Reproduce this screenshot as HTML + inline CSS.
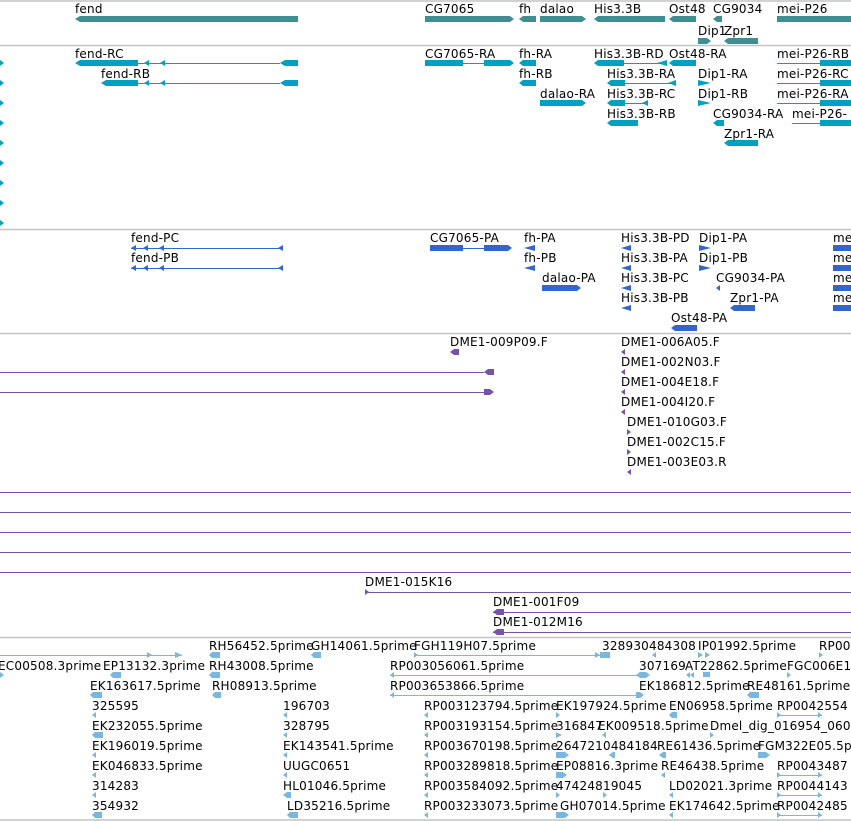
<!DOCTYPE html>
<html><head><meta charset="utf-8"><style>
html,body{margin:0;padding:0;background:#fff;width:851px;height:821px;overflow:hidden}
svg text{font-family:"DejaVu Sans","Liberation Sans",sans-serif;font-size:12px;fill:#000;letter-spacing:0.2px}
</style></head><body>
<svg width="851" height="821" xmlns="http://www.w3.org/2000/svg">
<g stroke="#c4c4c4" stroke-width="1.5">
<line x1="0" y1="1" x2="851" y2="1"/><line x1="0" y1="45.5" x2="851" y2="45.5"/>
<line x1="0" y1="229.5" x2="851" y2="229.5"/><line x1="0" y1="333.5" x2="851" y2="333.5"/>
<line x1="0" y1="637.5" x2="851" y2="637.5"/><line x1="0" y1="820" x2="851" y2="820"/>
</g>

<g fill="#3f8e91">
<polygon points="75,19 80,16 298,16 298,22 80,22"/>
<polygon points="425,16 510,16 514,19 510,22 425,22"/>
<polygon points="519,19 523,16 536,16 536,22 523,22"/>
<polygon points="540,16 582,16 586,19 582,22 540,22"/>
<polygon points="594,19 598,16 665,16 665,22 598,22"/>
<polygon points="669,19 673,16 696,16 696,22 673,22"/>
<polygon points="713,19 717,16 722,16 722,22 717,22"/>
<rect x="777" y="16" width="74" height="6"/>
<polygon points="698,38 707,38 711,41 707,44 698,44"/>
<polygon points="724,41 728,38 758,38 758,44 728,44"/>
</g>
<text x="75" y="13">fend</text><text x="425" y="13">CG7065</text><text x="519" y="13">fh</text>
<text x="540" y="13">dalao</text><text x="594" y="13">His3.3B</text><text x="669" y="13">Ost48</text>
<text x="713" y="13">CG9034</text><text x="777" y="13">mei-P26</text>
<text x="698" y="35">Dip1</text><text x="724" y="35">Zpr1</text>

<g fill="#00a0c0" stroke="#00a0c0">
<g stroke="none">
<polygon points="0,60 4,63 0,66"/><polygon points="0,80 4,83 0,86"/><polygon points="0,100 4,103 0,106"/>
<polygon points="0,120 4,123 0,126"/><polygon points="0,140 4,143 0,146"/><polygon points="0,160 4,163 0,166"/>
<polygon points="0,180 4,183 0,186"/><polygon points="0,200 4,203 0,206"/><polygon points="0,220 4,223 0,226"/>
</g>
<line x1="138" y1="63.5" x2="280" y2="63.5"/><line x1="138" y1="83.5" x2="280" y2="83.5"/>
<line x1="463" y1="63.5" x2="484" y2="63.5"/><line x1="624" y1="63.5" x2="667" y2="63.5"/>
<line x1="625" y1="83.5" x2="676" y2="83.5"/><line x1="625" y1="103.5" x2="648" y2="103.5"/>
<line x1="777" y1="63.5" x2="820" y2="63.5"/><line x1="777" y1="83.5" x2="820" y2="83.5"/>
<line x1="777" y1="103.5" x2="820" y2="103.5"/><line x1="792" y1="123.5" x2="820" y2="123.5"/>
<g stroke="none">
<polygon points="75,63 80,60 138,60 138,66 80,66"/><polygon points="101,83 106,80 138,80 138,86 106,86"/>
<polygon points="144,63 149,60 149,66"/><polygon points="160,63 165,60 165,66"/>
<polygon points="144,83 149,80 149,86"/><polygon points="160,83 165,80 165,86"/>
<polygon points="280,63 285,60 298,60 298,66 285,66"/><polygon points="280,83 285,80 298,80 298,86 285,86"/>
<polygon points="425,60 463,60 463,66 425,66"/><polygon points="484,60 510,60 514,63 510,66 484,66"/>
<polygon points="519,63 523,60 536,60 536,66 523,66"/><polygon points="519,83 523,80 536,80 536,86 523,86"/>
<polygon points="540,100 582,100 586,103 582,106 540,106"/>
<polygon points="594,63 598,60 624,60 624,66 598,66"/><polygon points="657,63 667,60 667,66"/>
<polygon points="607,83 611,80 625,80 625,86 611,86"/><polygon points="668,83 676,80 676,86"/>
<polygon points="607,103 611,100 625,100 625,106 611,106"/><polygon points="642,103 648,100 648,106"/>
<polygon points="607,123 611,120 638,120 638,126 611,126"/>
<polygon points="669,63 673,60 696,60 696,66 673,66"/>
<polygon points="698,80 711,83 698,86"/><polygon points="698,100 711,103 698,106"/>
<polygon points="713,123 717,120 724,120 724,126 717,126"/>
<polygon points="724,143 728,140 758,140 758,146 728,146"/>
<rect x="820" y="60" width="31" height="6"/><rect x="820" y="80" width="31" height="6"/>
<rect x="820" y="100" width="31" height="6"/><rect x="820" y="120" width="31" height="6"/>
</g></g>
<text x="75" y="58">fend-RC</text><text x="101" y="78">fend-RB</text>
<text x="425" y="58">CG7065-RA</text><text x="519" y="58">fh-RA</text><text x="519" y="78">fh-RB</text>
<text x="540" y="98">dalao-RA</text><text x="594" y="58">His3.3B-RD</text><text x="607" y="78">His3.3B-RA</text>
<text x="607" y="98">His3.3B-RC</text><text x="607" y="118">His3.3B-RB</text><text x="669" y="58">Ost48-RA</text>
<text x="698" y="78">Dip1-RA</text><text x="698" y="98">Dip1-RB</text><text x="713" y="118">CG9034-RA</text>
<text x="724" y="138">Zpr1-RA</text><text x="777" y="58">mei-P26-RB</text><text x="777" y="78">mei-P26-RC</text>
<text x="777" y="98">mei-P26-RA</text><text x="792" y="118">mei-P26-</text>

<g fill="#3366cc" stroke="#3366cc">
<line x1="131" y1="248.5" x2="283" y2="248.5"/><line x1="131" y1="268.5" x2="283" y2="268.5"/>
<line x1="463" y1="248.5" x2="484" y2="248.5"/>
<g stroke="none">
<polygon points="131,248 136,245 136,251"/><polygon points="143,248 148,245 148,251"/><polygon points="159,248 164,245 164,251"/><polygon points="278,248 283,245 283,251"/>
<polygon points="131,268 136,265 136,271"/><polygon points="143,268 148,265 148,271"/><polygon points="159,268 164,265 164,271"/><polygon points="278,268 283,265 283,271"/>
<rect x="430" y="245" width="33" height="6"/><polygon points="484,245 508,245 512,248 508,251 484,251"/>
<polygon points="524,248 535,245 535,251"/><polygon points="524,268 535,265 535,271"/>
<polygon points="542,285 577,285 581,288 577,291 542,291"/>
<polygon points="621,248 631,245 631,251"/><polygon points="621,268 631,265 631,271"/>
<polygon points="621,288 631,285 631,291"/><polygon points="621,308 631,305 631,311"/>
<polygon points="699,245 711,248 699,251"/><polygon points="699,265 711,268 699,271"/>
<polygon points="716,288 720,285 720,291"/>
<polygon points="730,308 734,305 755,305 755,311 734,311"/>
<polygon points="671,328 675,325 697,325 697,331 675,331"/>
<rect x="833" y="245" width="18" height="6"/><rect x="833" y="265" width="18" height="6"/>
<rect x="833" y="285" width="18" height="6"/><rect x="833" y="305" width="18" height="6"/>
</g></g>
<text x="131" y="242">fend-PC</text><text x="131" y="262">fend-PB</text><text x="430" y="242">CG7065-PA</text>
<text x="524" y="242">fh-PA</text><text x="524" y="262">fh-PB</text><text x="542" y="282">dalao-PA</text>
<text x="621" y="242">His3.3B-PD</text><text x="621" y="262">His3.3B-PA</text><text x="621" y="282">His3.3B-PC</text>
<text x="621" y="302">His3.3B-PB</text><text x="699" y="242">Dip1-PA</text><text x="699" y="262">Dip1-PB</text>
<text x="716" y="282">CG9034-PA</text><text x="730" y="302">Zpr1-PA</text><text x="671" y="322">Ost48-PA</text>
<text x="833" y="242">me</text><text x="833" y="262">me</text><text x="833" y="282">me</text><text x="833" y="302">me</text>

<g fill="#7752aa" stroke="#7752aa">
<line x1="0" y1="372.5" x2="484" y2="372.5"/><line x1="0" y1="392.5" x2="484" y2="392.5"/>
<line x1="0" y1="492.5" x2="851" y2="492.5"/><line x1="0" y1="512.5" x2="851" y2="512.5"/>
<line x1="0" y1="532.5" x2="851" y2="532.5"/><line x1="0" y1="552.5" x2="851" y2="552.5"/>
<line x1="0" y1="572.5" x2="851" y2="572.5"/><line x1="365" y1="592.5" x2="851" y2="592.5"/>
<line x1="493" y1="612.5" x2="851" y2="612.5"/><line x1="493" y1="632.5" x2="851" y2="632.5"/>
<g stroke="none">
<polygon points="450,352 454,349 459,349 459,355 454,355"/>
<polygon points="484,372 488,369 494,369 494,375 488,375"/>
<polygon points="484,389 490,389 494,392 490,395 484,395"/>
<polygon points="621,352 625,349 625,355"/><polygon points="621,372 625,369 625,375"/>
<polygon points="621,392 625,389 625,395"/><polygon points="621,412 625,409 625,415"/>
<polygon points="627,429 631,432 627,435"/><polygon points="627,449 631,452 627,455"/>
<polygon points="627,472 631,469 631,475"/>
<polygon points="365,589 369,592 365,595"/>
<polygon points="493,612 497,609 504,609 504,615 497,615"/>
<polygon points="493,632 497,629 504,629 504,635 497,635"/>
</g></g>
<text x="450" y="346">DME1-009P09.F</text><text x="621" y="346">DME1-006A05.F</text>
<text x="621" y="366">DME1-002N03.F</text><text x="621" y="386">DME1-004E18.F</text>
<text x="621" y="406">DME1-004I20.F</text><text x="627" y="426">DME1-010G03.F</text>
<text x="627" y="446">DME1-002C15.F</text><text x="627" y="466">DME1-003E03.R</text>
<text x="365" y="586">DME1-015K16</text><text x="493" y="606">DME1-001F09</text><text x="493" y="626">DME1-012M16</text>

<g fill="#7bb6de" stroke="#7bb6de">
<line x1="0" y1="655.5" x2="182" y2="655.5"/><line x1="414" y1="655.5" x2="600" y2="655.5"/>
<line x1="390" y1="675.5" x2="640" y2="675.5"/><line x1="390" y1="695.5" x2="640" y2="695.5"/>
<line x1="777" y1="715.5" x2="822" y2="715.5"/><line x1="777" y1="775.5" x2="822" y2="775.5"/>
<line x1="777" y1="795.5" x2="822" y2="795.5"/><line x1="777" y1="815.5" x2="822" y2="815.5"/>
<g stroke="none">
<polygon points="147,652 152,655 147,658"/><polygon points="175,652 182,655 175,658"/>
<polygon points="209,655 212,652 220,652 220,658 212,658"/><polygon points="311,655 314,652 321,652 321,658 314,658"/>
<polygon points="414,652 418,655 414,658"/><polygon points="595,652 600,655 595,658"/><rect x="600" y="652" width="10" height="6"/>
<polygon points="652,655 656,652 656,658"/><polygon points="698,652 703,655 698,658"/><polygon points="705,652 710,655 705,658"/>
<polygon points="819,652 823,655 819,658"/>
<polygon points="0,672 4,675 0,678"/><polygon points="110,675 113,672 121,672 121,678 113,678"/>
<polygon points="209,675 212,672 220,672 220,678 212,678"/><polygon points="390,675 394,672 394,678"/>
<polygon points="636,675 640,672 646,672 650,675 646,678 640,678"/>
<polygon points="686,675 690,672 690,678"/><polygon points="690,675 694,672 694,678"/><rect x="703" y="672" width="7" height="5"/>
<polygon points="787,672 791,675 787,678"/>
<polygon points="90,695 93,692 102,692 102,698 93,698"/><polygon points="212,695 215,692 221,692 221,698 215,698"/>
<polygon points="390,695 394,692 394,698"/><polygon points="636,692 640,692 644,695 640,698 636,698"/>
<polygon points="747,695 750,692 759,692 759,698 750,698"/>
<polygon points="92,715 96,712 96,718"/><polygon points="283,715 287,712 287,718"/><polygon points="424,715 428,712 428,718"/>
<polygon points="556,712 560,715 556,718"/><polygon points="669,715 672,712 677,712 677,718 672,718"/><polygon points="777,712 781,715 777,718"/><polygon points="818,712 822,715 818,718"/>
<polygon points="92,735 95,732 103,732 103,738 95,738"/><polygon points="283,735 287,732 287,738"/><polygon points="424,735 428,732 428,738"/>
<polygon points="556,732 562,735 556,738"/><polygon points="602,735 606,732 606,738"/><polygon points="710,732 714,735 710,738"/>
<polygon points="92,755 96,752 96,758"/><polygon points="283,755 287,752 287,758"/><polygon points="424,755 428,752 428,758"/>
<polygon points="556,752 565,752 569,755 565,758 556,758"/><polygon points="609,755 613,752 615,752 615,758 613,758"/>
<polygon points="659,755 663,752 666,752 666,758 663,758"/><polygon points="758,752 766,752 770,755 766,758 758,758"/>
<polygon points="92,775 96,772 96,778"/><polygon points="283,775 287,772 287,778"/><polygon points="424,775 428,772 428,778"/>
<polygon points="556,772 563,772 567,775 563,778 556,778"/><polygon points="661,775 665,772 665,778"/><polygon points="777,772 781,775 777,778"/><polygon points="818,772 822,775 818,778"/>
<polygon points="92,795 96,792 96,798"/><polygon points="283,795 287,792 291,792 291,798 287,798"/><polygon points="424,795 428,792 428,798"/>
<polygon points="556,792 560,795 556,798"/><polygon points="603,792 607,795 603,798"/><polygon points="669,795 673,792 673,798"/><polygon points="777,792 781,795 777,798"/><polygon points="818,792 822,795 818,798"/>
<polygon points="92,815 95,812 102,812 102,818 95,818"/><polygon points="287,815 290,812 298,812 298,818 290,818"/><polygon points="424,815 428,812 428,818"/>
<polygon points="556,812 565,812 569,815 565,818 556,818"/><polygon points="669,815 673,812 673,818"/><polygon points="777,812 781,815 777,818"/><polygon points="818,812 822,815 818,818"/>
</g></g>
<text x="209" y="650">RH56452.5prime</text><text x="311" y="650">GH14061.5prime</text><text x="414" y="650">FGH119H07.5prime</text>
<text x="602" y="650">328930484308</text><text x="698" y="650">IP01992.5prime</text><text x="819" y="650">RP00</text>
<text x="-2" y="670">EC00508.3prime</text><text x="103" y="670">EP13132.3prime</text><text x="209" y="670">RH43008.5prime</text>
<text x="390" y="670">RP003056061.5prime</text><text x="639" y="670">307169</text><text x="685" y="670">AT22862.5prime</text><text x="787" y="670">FGC006E1</text>
<text x="90" y="690">EK163617.5prime</text><text x="212" y="690">RH08913.5prime</text><text x="390" y="690">RP003653866.5prime</text>
<text x="639" y="690">EK186812.5prime</text><text x="747" y="690">RE48161.5prime</text>
<text x="92" y="710">325595</text><text x="283" y="710">196703</text><text x="424" y="710">RP003123794.5prime</text>
<text x="556" y="710">EK197924.5prime</text><text x="669" y="710">EN06958.5prime</text><text x="777" y="710">RP0042554</text>
<text x="92" y="730">EK232055.5prime</text><text x="283" y="730">328795</text><text x="424" y="730">RP003193154.5prime</text>
<text x="556" y="730">316847</text><text x="598" y="730">EK009518.5prime</text><text x="710" y="730">Dmel_dig_016954_0606</text>
<text x="92" y="750">EK196019.5prime</text><text x="283" y="750">EK143541.5prime</text><text x="424" y="750">RP003670198.5prime</text>
<text x="556" y="750">2647210484184</text><text x="657" y="750">RE61436.5prime</text><text x="758" y="750">FGM322E05.5p</text>
<text x="92" y="770">EK046833.5prime</text><text x="283" y="770">UUGC0651</text><text x="424" y="770">RP003289818.5prime</text>
<text x="556" y="770">EP08816.3prime</text><text x="661" y="770">RE46438.5prime</text><text x="777" y="770">RP0043487</text>
<text x="92" y="790">314283</text><text x="283" y="790">HL01046.5prime</text><text x="424" y="790">RP003584092.5prime</text>
<text x="556" y="790">47424819045</text><text x="669" y="790">LD02021.3prime</text><text x="777" y="790">RP0044143</text>
<text x="92" y="810">354932</text><text x="287" y="810">LD35216.5prime</text><text x="424" y="810">RP003233073.5prime</text>
<text x="560" y="810">GH07014.5prime</text><text x="669" y="810">EK174642.5prime</text><text x="777" y="810">RP0042485</text>
</svg>
</body></html>
